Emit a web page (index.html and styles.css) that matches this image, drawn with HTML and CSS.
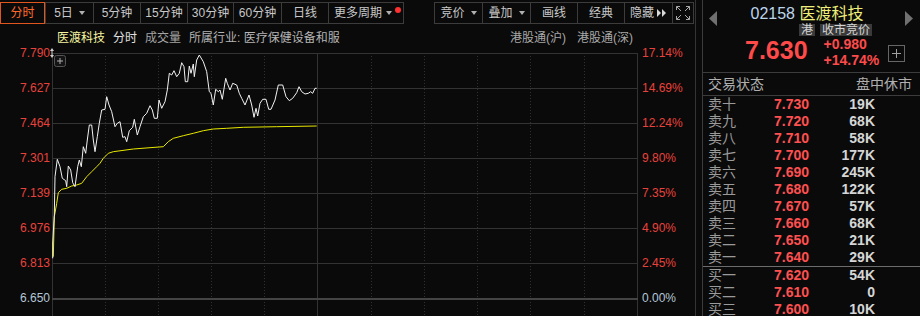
FILE: index.html
```html
<!DOCTYPE html>
<html lang="zh-CN">
<head>
    <meta charset="utf-8" />
    <title>医渡科技 分时</title>
    <link rel="stylesheet" href="styles.css">
</head>
<body>
    <div class="app">
        <div class="main">
            <!--周期切换-->
            <div class="toolbar">
                <div class="tab-on">分时</div>
                <div class="tabs">
                    <div class="tab w48">5日<i class="caret"></i></div>
                    <div class="tab w47">5分钟</div>
                    <div class="tab w47">15分钟</div>
                    <div class="tab w46">30分钟</div>
                    <div class="tab w48">60分钟</div>
                    <div class="tab w47">日线</div>
                    <div class="tab more">更多周期<i class="caret"></i><b class="dot"></b></div>
                </div>
                <div class="tabs tools">
                    <div class="tab w48">竞价<i class="caret"></i></div>
                    <div class="tab w48">叠加<i class="caret"></i></div>
                    <div class="tab w47">画线</div>
                    <div class="tab w47">经典</div>
                    <div class="tab w48">隐藏<svg class="dbl" width="10" height="8" viewBox="0 0 10 8"><path d="M0 0L4 4L0 8Z M5 0L9 4L5 8Z" fill="#d8d8d8"/></svg></div>
                    <div class="tab full">
                        <svg width="16" height="16" viewBox="0 0 16 16" fill="none" stroke="#a8a8a8" stroke-width="1">
                            <path d="M1.5 5V1.5H5 M1.5 1.5L6 6 M11 1.5H14.5V5 M14.5 1.5L10 6 M1.5 11V14.5H5 M1.5 14.5L6 10 M11 14.5H14.5V11 M14.5 14.5L10 10"/>
                        </svg>
                    </div>
                </div>
            </div>
            <!--指标说明-->
            <div class="infobar">
                <span class="stock">医渡科技</span>
                <span class="cur">分时</span>
                <span class="dim">成交量</span>
                <span>所属行业: 医疗保健设备和服</span>
                <span class="hk">港股通(沪)</span>
                <span class="hk2">港股通(深)</span>
            </div>
            <!--分时图-->
            <div class="chart">
                <div class="axis axis-left">
                    <div>7.790<svg class="drag" width="4" height="10" viewBox="0 0 4 10"><path d="M2 0L4 3H0Z M2 10L4 7H0Z M1.5 3h1v4h-1z" fill="#cfcfcf"/></svg></div>
                    <div>7.627</div>
                    <div>7.464</div>
                    <div>7.301</div>
                    <div>7.139</div>
                    <div>6.976</div>
                    <div>6.813</div>
                    <div class="base">6.650</div>
                </div>
                <svg class="plot" width="586" height="263" viewBox="0 0 586 263">
                    <g stroke="#303030" stroke-width="1" stroke-dasharray="1 2">
                        <line x1="53.5" y1="0" x2="53.5" y2="263"/>
                        <line x1="106.5" y1="0" x2="106.5" y2="263"/>
                        <line x1="159.5" y1="0" x2="159.5" y2="263"/>
                        <line x1="212.5" y1="0" x2="212.5" y2="263"/>
                        <line x1="319.5" y1="0" x2="319.5" y2="263"/>
                        <line x1="372.5" y1="0" x2="372.5" y2="263"/>
                        <line x1="425.5" y1="0" x2="425.5" y2="263"/>
                        <line x1="478.5" y1="0" x2="478.5" y2="263"/>
                        <line x1="532.5" y1="0" x2="532.5" y2="263"/>
                    </g>
                    <g stroke="#333" stroke-width="1">
                        <line x1="0" y1="0.5" x2="586" y2="0.5"/>
                        <line x1="0" y1="35.5" x2="586" y2="35.5"/>
                        <line x1="0" y1="70.5" x2="586" y2="70.5"/>
                        <line x1="0" y1="105.5" x2="586" y2="105.5"/>
                        <line x1="0" y1="140.5" x2="586" y2="140.5"/>
                        <line x1="0" y1="175.5" x2="586" y2="175.5"/>
                        <line x1="0" y1="210.5" x2="586" y2="210.5"/>
                        <line x1="0.5" y1="0" x2="0.5" y2="263"/>
                        <line x1="265.5" y1="0" x2="265.5" y2="263"/>
                        <line x1="585.5" y1="0" x2="585.5" y2="263"/>
                    </g>
                    <line x1="0" y1="246" x2="586" y2="246" stroke="#444" stroke-width="2"/>
                    <polyline fill="none" stroke="#e8e800" stroke-width="1" points="1.3,203.7 2.3,163.7 4.7,150.3 6.3,139.7 9.7,136.3 14.7,135.3 19.7,133 24.7,132 29.7,130.3 34.7,123.7 39.7,118.7 44.7,113.7 48,110.3 51.3,105.3 56.3,100.3 61.3,98.7 81.3,96 98,94.7 111.3,93.7 116.3,88.7 121.3,85.3 131.3,82.7 141.3,80.3 151.3,77.7 161.3,76 174.7,75.3 191.3,74.3 208,74 224.7,73.7 264.7,73"/>
                    <polyline fill="none" stroke="#f2f2f2" stroke-width="1" points="0.7,205.3 0.7,190 2.3,162 3,123.7 5.3,106.3 8,113.7 10.3,125.3 13.7,127.7 14.7,133.7 16.3,113 18.7,117 20.7,129.7 23,133.7 25.7,113.7 27.3,107 29.3,113.7 31.3,93.7 33.7,100.3 35.3,87 37.3,72 39.7,72 41.3,87 43,98.7 45.3,83.7 47.3,70.3 49.7,57 53,56.3 54.7,43.7 57,52 59.7,58.7 63,73.7 65.3,70.3 68,68.7 70.7,84.3 73,83.7 74.7,88.7 77.3,77.7 80.7,74.3 82.3,66.3 85.3,82 88,73.7 91.3,63.7 94.7,60.3 98,52.7 100.3,57 102.3,65.3 105.3,65.3 107,47 109.7,55.3 113,48.7 115.3,37 117.3,20.3 119.7,22 122,17.7 124.7,23.7 127.3,20.3 129.7,9.7 132,13.7 133.3,28.7 135.7,28.7 137.3,13 139,20.3 141.3,11 142.3,23.7 144.7,7 147.3,2 151.3,8.7 154.7,18.7 157.3,38.7 159,40.3 161.3,52 163.7,36.3 166.3,38.7 168,37 170.3,46.3 173.7,25.3 175.3,30.3 178,37 180.7,30.3 184.7,32 187.3,40.3 189.7,45.3 193,52 197,42 199.7,52 202,64.3 204,55.3 205.7,63 208,50.3 210.7,46.3 214,46.3 216.7,56.3 219,56.3 223,47 226.3,32 230.7,32 234,43.7 237.3,47.7 240.7,45.3 244.7,39.7 247,33.7 249.7,38.7 253,41 256.3,40.3 258.7,38.7 260.7,40.3 263,35.3 264.7,35.3"/>
                    <rect x="2.5" y="2.5" width="11" height="11" rx="2" fill="#141414" stroke="#555"/>
                    <path d="M5 8H11 M8 5V11" stroke="#b0b0b0" stroke-width="1"/>
                </svg>
                <div class="axis axis-right">
                    <div>17.14%</div>
                    <div>14.69%</div>
                    <div>12.24%</div>
                    <div>9.80%</div>
                    <div>7.35%</div>
                    <div>4.90%</div>
                    <div>2.45%</div>
                    <div class="base">0.00%</div>
                </div>
            </div>
        </div>
        <div class="split"></div>
        <!--盘口-->
        <div class="side">
            <div class="head">
                <div class="title-row">
                    <svg class="arrow-l" width="8" height="15" viewBox="0 0 8 15"><path d="M8 0L0 7.5L8 15Z" fill="#707070"/></svg>
                    <div class="title"><span class="code">02158</span> <span class="name">医渡科技</span></div>
                    <svg class="arrow-r" width="8" height="15" viewBox="0 0 8 15"><path d="M0 0L8 7.5L0 15Z" fill="#707070"/></svg>
                </div>
                <div class="tags">
                    <span class="tag">港</span>
                    <span class="tag">收市竞价</span>
                </div>
                <div class="price-row">
                    <div class="last">7.630</div>
                    <div class="change">
                        <div>+0.980</div>
                        <div>+14.74%</div>
                    </div>
                    <div class="add"></div>
                </div>
            </div>
            <div class="status">
                <span>交易状态</span>
                <span>盘中休市</span>
            </div>
            <div class="book">
                <div class="row"><span>卖十</span><b>7.730</b><em>19K</em></div>
                <div class="row"><span>卖九</span><b>7.720</b><em>68K</em></div>
                <div class="row"><span>卖八</span><b>7.710</b><em>58K</em></div>
                <div class="row"><span>卖七</span><b>7.700</b><em>177K</em></div>
                <div class="row"><span>卖六</span><b>7.690</b><em>245K</em></div>
                <div class="row"><span>卖五</span><b>7.680</b><em>122K</em></div>
                <div class="row"><span>卖四</span><b>7.670</b><em>57K</em></div>
                <div class="row"><span>卖三</span><b>7.660</b><em>68K</em></div>
                <div class="row"><span>卖二</span><b>7.650</b><em>21K</em></div>
                <div class="row"><span>卖一</span><b>7.640</b><em>29K</em></div>
            </div>
            <div class="book buy">
                <div class="row"><span>买一</span><b>7.620</b><em>54K</em></div>
                <div class="row"><span>买二</span><b>7.610</b><em>0</em></div>
                <div class="row"><span>买三</span><b>7.600</b><em>10K</em></div>
            </div>
        </div>
    </div>
</body>
</html>
```

FILE: styles.css
```css
* {
    margin: 0;
    padding: 0;
    box-sizing: border-box;
}

body {
    background-color: #0a0a0a;
    font-family: "Liberation Sans", "Noto Sans CJK SC", sans-serif;
    color: #c8c8c8;
    overflow: hidden;
}

.app {
    display: flex;
    width: 920px;
    height: 316px;
    overflow: hidden;
}

.main {
    width: 695px;
    flex: none;
}

.split {
    width: 8px;
    flex: none;
    border-left: 1px solid #343434;
    border-right: 1px solid #3c3c3c;
}

/* toolbar */
.toolbar {
    display: flex;
    height: 24px;
    padding-top: 2px;
    font-size: 12px;
    line-height: 14px;
}

.tab-on {
    width: 45px;
    height: 22px;
    border: 1px solid #e0561e;
    color: #ff6a2a;
    display: flex;
    align-items: center;
    justify-content: center;
}

.tabs {
    display: flex;
    height: 22px;
    border: 1px solid #3c3c3c;
    border-left: none;
}

    .tabs.tools {
        margin-left: 30px;
    }

.tab {
    position: relative;
    display: flex;
    align-items: center;
    justify-content: center;
    border-left: 1px solid #3c3c3c;
    color: #c8c8c8;
}

.w46 { width: 46px; }
.w47 { width: 47px; }
.w48 { width: 48px; }

.tab.more {
    width: 75px;
    justify-content: flex-start;
    padding-left: 5px;
}

.tab.full {
    width: 21px;
}

.caret {
    display: inline-block;
    margin-left: 6px;
    border-left: 3px solid transparent;
    border-right: 3px solid transparent;
    border-top: 4px solid #b0b0b0;
}

.tab.more .caret {
    margin-left: 4px;
}

.dot {
    position: absolute;
    top: 4px;
    right: 2px;
    width: 6px;
    height: 6px;
    border-radius: 50%;
    background-color: #ff3030;
}

.dbl {
    margin-left: 3px;
}

/* info line */
.infobar {
    display: flex;
    height: 22px;
    padding: 6px 62px 0 57px;
    font-size: 12px;
    line-height: 16px;
    color: #b4b4b4;
    gap: 8px;
}

    .infobar .stock {
        color: #f4f4a0;
    }

    .infobar .cur {
        color: #e0e0e0;
    }

    .infobar .dim {
        color: #a4a4a4;
    }

    .infobar .hk {
        margin-left: auto;
        color: #a8a8a8;
    }

    .infobar .hk2 {
        margin-left: 3px;
        color: #a8a8a8;
    }

/* chart */
.chart {
    display: flex;
    height: 270px;
    overflow: hidden;
}

.axis {
    flex: none;
    font-size: 12px;
    color: #e8423c;
}

    .axis div {
        height: 35px;
        line-height: 14px;
        white-space: nowrap;
    }

    .axis .base {
        color: #b4c6d6;
    }

.axis-left {
    width: 52px;
    padding-right: 2px;
    text-align: right;
}

.drag {
    position: relative;
    margin-right: -4px;
    vertical-align: -1px;
}

.plot {
    display: block;
    flex: none;
    margin-top: 7px;
}

.axis-right {
    width: 57px;
    padding-left: 4px;
}

/* side panel */
.side {
    width: 217px;
    flex: none;
}

.head {
    height: 73px;
    border-bottom: 1px solid #3c3c3c;
}

.title-row {
    display: flex;
    align-items: flex-start;
    height: 24px;
}

.arrow-l {
    margin: 11px 0 0 6px;
}

.arrow-r {
    margin: 11px 7px 0 0;
}

.title {
    flex: 1;
    text-align: center;
    padding: 3px 8px 0 0;
    font-size: 16px;
    line-height: 21px;
}

    .title .code {
        color: #bcd4ea;
    }

    .title .name {
        color: #eeee78;
    }

.tags {
    display: flex;
    height: 12px;
    margin-left: 96px;
    gap: 5px;
}

.tag {
    padding: 0 2px;
    background-color: #3a3a3a;
    color: #d4d4d4;
    font-size: 12px;
    line-height: 12px;
}

.price-row {
    display: flex;
    align-items: flex-start;
    padding-left: 42px;
    color: #ff4a4a;
    font-weight: bold;
}

.last {
    margin-top: 1px;
    font-size: 25px;
    line-height: 26px;
}

.change {
    margin-left: 16px;
    font-size: 14px;
    line-height: 16px;
}

.add {
    position: relative;
    width: 17px;
    height: 17px;
    margin: 9px 0 0 9px;
    border: 1px solid #666;
}

    .add::before,
    .add::after {
        content: "";
        position: absolute;
        background-color: #a0a0a0;
    }

    .add::before {
        left: 3px;
        top: 7px;
        width: 9px;
        height: 1px;
    }

    .add::after {
        left: 7px;
        top: 3px;
        width: 1px;
        height: 9px;
    }

.status {
    display: flex;
    justify-content: space-between;
    height: 23px;
    padding: 0 8px 0 5px;
    border-bottom: 1px solid #3c3c3c;
    font-size: 14px;
    line-height: 22px;
    color: #b0b0b0;
}

.book .row {
    display: grid;
    grid-template-columns: 54px 47px 66px;
    height: 17px;
    padding-left: 5px;
    font-size: 14px;
    line-height: 17px;
}

    .book .row span {
        color: #9a9a9a;
    }

    .book .row b {
        text-align: right;
        color: #ff5050;
    }

    .book .row em {
        font-style: normal;
        font-weight: bold;
        text-align: right;
        color: #d6d6d6;
    }

.book.buy {
    border-top: 1px solid #6c6c6c;
}
```
